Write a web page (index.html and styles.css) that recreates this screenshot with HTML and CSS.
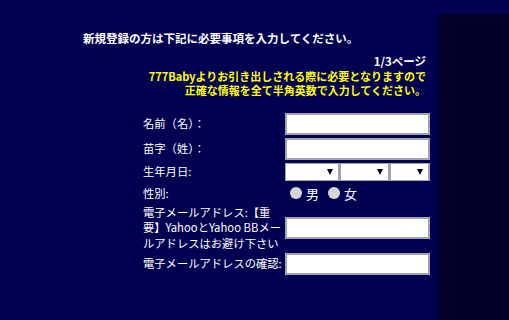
FILE: index.html
```html
<!DOCTYPE html>
<html lang="ja">
<head>
<meta charset="utf-8">
<link rel="stylesheet" href="styles.css">
</head>
<body>
<div class="page">
  <main class="main">
    <p class="intro">新規登録の方は下記に必要事項を入力してください。</p>
    <div class="notice">
      <p class="pageno">1/3ページ</p>
      <p class="warn">777Babyよりお引き出しされる際に必要となりますので<br>正確な情報を全て半角英数で入力してください。</p>
    </div>
    <form class="form">
      <label class="lbl">名前（名）：</label>
      <input class="txt" type="text">
      <label class="lbl">苗字（姓）：</label>
      <input class="txt" type="text">
      <label class="lbl">生年月日:</label>
      <div class="dob">
        <span class="sel w1"><select></select><i class="arrow"></i></span>
        <span class="sel w2"><select></select><i class="arrow"></i></span>
        <span class="sel w3"><select></select><i class="arrow"></i></span>
      </div>
      <label class="lbl">性別:</label>
      <div class="gender">
        <label class="opt"><input type="radio" name="g">男</label>
        <label class="opt"><input type="radio" name="g">女</label>
      </div>
      <label class="lbl multi">電子メールアドレス:【重<br>要】YahooとYahoo BBメー<br>ルアドレスはお避け下さい</label>
      <input class="txt" type="text">
      <label class="lbl">電子メールアドレスの確認:</label>
      <input class="txt" type="text">
    </form>
  </main>
  <aside class="side"></aside>
</div>
</body>
</html>
```
FILE: styles.css
```css
html, body {
  margin: 0;
  padding: 0;
  background: #020050;
  height: 100%;
}
body {
  font-family: "Noto Sans CJK JP", "Noto Sans", sans-serif;
  font-size: 12px;
  color: #ffffff;
}
.page {
  display: flex;
  height: 320px;
  overflow: hidden;
}
.main {
  width: 437px;
  flex: none;
}
.side {
  flex: 1;
  margin-top: 14px;
  background: #020028;
}
p { margin: 0; }
.intro {
  font-weight: bold;
  font-size: 11.5px;
  line-height: 16px;
  padding: 30px 0 0 83px;
  letter-spacing: 0;
}
.notice {
  padding: 8px 11px 0 0;
  text-align: right;
  font-weight: bold;
  font-size: 11px;
  line-height: 14.5px;
}
.pageno {
  color: #ffffff;
  font-size: 11.5px;
}
.warn {
  color: #ffff00;
  letter-spacing: 0;
}
.form {
  display: grid;
  grid-template-columns: 142px 145px;
  grid-template-rows: 22px 22px 18px 19px 44px 22px;
  row-gap: 3px;
  align-items: center;
  margin: 15px 0 0 143px;
}
.lbl {
  font-size: 11.3px;
  line-height: 15px;
  white-space: nowrap;
}
.multi {
  line-height: 15.5px;
  align-self: start;
  margin-top: -1px;
}
.txt {
  box-sizing: border-box;
  width: 145px;
  height: 22px;
  margin: 0;
  border: 2px solid #a4a4ae;
  background: #ffffff;
  padding: 0 2px;
  outline: none;
}
.dob {
  display: flex;
  height: 18px;
}
.sel {
  position: relative;
  display: block;
  height: 18px;
}
.w1 { width: 55px; }
.w2 { width: 50px; }
.w3 { width: 40px; }
.sel select {
  appearance: none;
  -webkit-appearance: none;
  box-sizing: border-box;
  width: 100%;
  height: 18px;
  margin: 0;
  border: 1px solid #a4a4ae;
  border-right-width: 2px;
  background: #ffffff;
  border-radius: 0;
}
.arrow {
  position: absolute;
  right: 7px;
  top: 6px;
  width: 0;
  height: 0;
  border-left: 3px solid transparent;
  border-right: 3px solid transparent;
  border-top: 6px solid #05052a;
}
.gender {
  display: flex;
  align-items: center;
  padding-left: 5px;
  gap: 9px;
  font-size: 13px;
}
.opt {
  display: flex;
  align-items: center;
  gap: 4px;
}
.opt input {
  appearance: none;
  -webkit-appearance: none;
  width: 12px;
  height: 12px;
  margin: 0;
  border-radius: 50%;
  background: #d6d6d6;
  border: none;
}
```
